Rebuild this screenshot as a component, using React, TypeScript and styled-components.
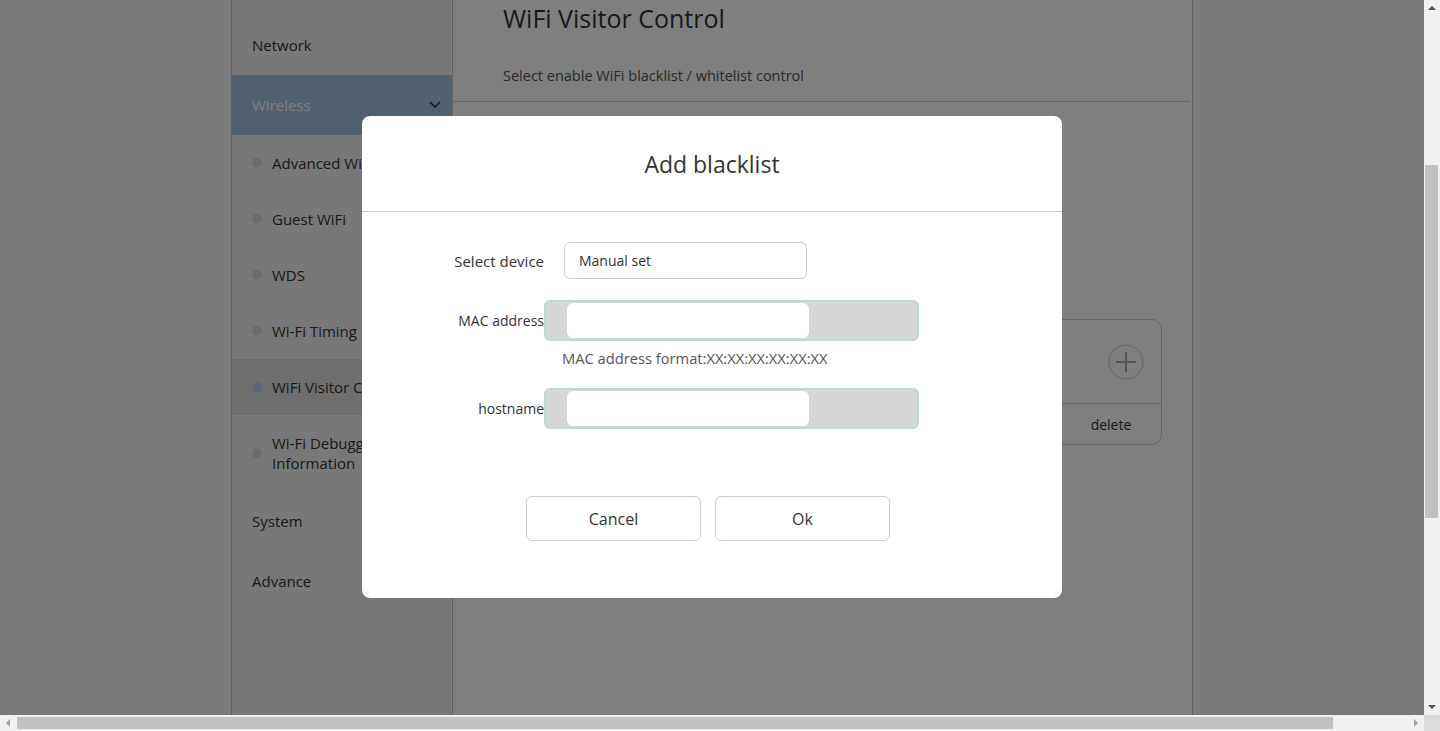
import * as React from 'react';
import styled, { createGlobalStyle } from 'styled-components';

const GlobalStyle = createGlobalStyle`
  html, body {
    margin: 0;
    padding: 0;
    overflow: hidden;
  }
  body {
    font-family: "Open Sans", "Noto Sans", Arial, sans-serif;
    color: #333;
  }
  * {
    box-sizing: border-box;
  }
`;

type SubItem = { label: string; active?: boolean };

const subItems: SubItem[] = [
  { label: 'Advanced WiFi' },
  { label: 'Guest WiFi' },
  { label: 'WDS' },
  { label: 'Wi-Fi Timing' },
  { label: 'WiFi Visitor Control', active: true },
  { label: 'Wi-Fi Debugging Information' },
];

const App: React.FC = () => {
  return (
    <>
      <GlobalStyle />
      <Frame>
        <Viewport>
          <Page>
            <Gutter />
            <Sidebar>
              <MenuItem>Network</MenuItem>
              <MenuItem $open>
                Wireless
                <svg width="12" height="8" viewBox="0 0 12 8">
                  <polyline points="1,1 6,6 11,1" fill="none" stroke="#333" strokeWidth="1.6" />
                </svg>
              </MenuItem>
              {subItems.map((item) => (
                <SubMenuItem key={item.label} $active={item.active}>
                  <Dot $active={item.active} />
                  <span>{item.label}</span>
                </SubMenuItem>
              ))}
              <MenuItem>System</MenuItem>
              <MenuItem>Advance</MenuItem>
            </Sidebar>
            <Content>
              <Header>
                <Title>WiFi Visitor Control</Title>
                <Subtitle>Select enable WiFi blacklist / whitelist control</Subtitle>
              </Header>
              <ModeRow>
                <ModeLabel>Blacklist</ModeLabel>
                <ModeLabel>Whitelist</ModeLabel>
              </ModeRow>
              <ListCard>
                <ListTop>
                  <svg width="36" height="36" viewBox="0 0 36 36">
                    <circle cx="18" cy="18" r="17" fill="none" stroke="#c8c8c8" strokeWidth="1" />
                    <line x1="8" y1="18" x2="28" y2="18" stroke="#aaa" strokeWidth="2" />
                    <line x1="18" y1="8" x2="18" y2="28" stroke="#aaa" strokeWidth="2" />
                  </svg>
                </ListTop>
                <ListRow>
                  <Cell>Device name</Cell>
                  <Cell>MAC address</Cell>
                  <Cell>delete</Cell>
                </ListRow>
              </ListCard>
            </Content>
            <Gutter />
          </Page>
          <Overlay>
            <Modal>
              <ModalHeader>Add blacklist</ModalHeader>
              <ModalBody>
                <FieldRow>
                  <FieldLabel $size={15}>Select device</FieldLabel>
                  <SelectBox>Manual set</SelectBox>
                </FieldRow>
                <FieldRow $gap={21}>
                  <FieldLabel>MAC address</FieldLabel>
                  <FocusWrap>
                    <TextInput />
                  </FocusWrap>
                </FieldRow>
                <Hint>MAC address format:XX:XX:XX:XX:XX:XX</Hint>
                <FieldRow $gap={20}>
                  <FieldLabel>hostname</FieldLabel>
                  <FocusWrap>
                    <TextInput />
                  </FocusWrap>
                </FieldRow>
                <Buttons>
                  <Button>Cancel</Button>
                  <Button>Ok</Button>
                </Buttons>
              </ModalBody>
            </Modal>
          </Overlay>
        </Viewport>
        <VScroll>
          <Arrow $dir="up" />
          <VTrack>
            <VThumb $top={149} $height={353} />
          </VTrack>
          <Arrow $dir="down" />
        </VScroll>
        <HScroll>
          <Arrow $dir="left" />
          <HTrack>
            <HThumb $left={1} $width={1316} />
          </HTrack>
          <Arrow $dir="right" />
        </HScroll>
        <Corner />
      </Frame>
    </>
  );
};

const Frame = styled.div`
  width: 100vw;
  height: 100vh;
  display: grid;
  grid-template-columns: 1fr 16px;
  grid-template-rows: 1fr 16px;
`;

const Viewport = styled.div`
  position: relative;
  overflow: hidden;
`;

const Page = styled.div`
  display: flex;
  height: 100%;
  background: #f4f4f4;
`;

const Gutter = styled.div`
  flex: 0 0 231px;
  &:last-child {
    flex: 1;
  }
`;

const Sidebar = styled.nav`
  flex: 0 0 222px;
  background: #f1f1f1;
  border-left: 1px solid #c4c4c4;
  border-right: 1px solid #c4c4c4;
  padding-top: 15px;
  font-size: 15px;
`;

const MenuItem = styled.div<{ $open?: boolean }>`
  height: 60px;
  display: flex;
  align-items: center;
  justify-content: space-between;
  padding: 0 11px 0 20px;
  background: ${(p) => (p.$open ? '#a6c0e0' : 'transparent')};
  color: ${(p) => (p.$open ? '#fff' : '#333')};
`;

const SubMenuItem = styled.div<{ $active?: boolean }>`
  display: flex;
  align-items: center;
  gap: 10px;
  padding: 18px 20px;
  line-height: 20px;
  background: ${(p) => (p.$active ? '#dcdcdc' : 'transparent')};
  color: #333;
`;

const Dot = styled.i<{ $active?: boolean }>`
  flex: 0 0 10px;
  height: 10px;
  border-radius: 50%;
  background: ${(p) => (p.$active ? '#b6cff0' : '#d6d6d6')};
`;

const Content = styled.main`
  flex: 0 0 740px;
  background: #fff;
  border-right: 1px solid #c4c4c4;
`;

const Header = styled.header`
  padding: 0 0 15px 50px;
  margin-right: 2px;
  border-bottom: 1px solid #ccc;
`;

const Title = styled.h1`
  margin: 0;
  font-size: 25px;
  font-weight: 400;
  line-height: 37px;
  color: #333;
`;

const Subtitle = styled.p`
  margin: 29px 0 0;
  font-size: 14.5px;
  line-height: 20px;
  color: #555;
`;

const ModeRow = styled.div`
  height: 217px;
  display: flex;
  align-items: center;
  gap: 40px;
  padding-left: 50px;
  font-size: 15px;
`;

const ModeLabel = styled.span`
  color: #333;
`;

const ListCard = styled.section`
  margin: 0 30px 0 50px;
  border: 1px solid #ccc;
  border-radius: 10px;
`;

const ListTop = styled.div`
  height: 84px;
  display: flex;
  align-items: center;
  justify-content: flex-end;
  padding-right: 17px;
  padding-top: 1px;
  border-bottom: 1px solid #ccc;
`;

const ListRow = styled.div`
  height: 40px;
  display: grid;
  grid-template-columns: 1fr 1fr 100px;
  align-items: center;
  font-size: 14px;
  color: #333;
`;

const Cell = styled.span`
  text-align: center;
`;

const Overlay = styled.div`
  position: absolute;
  inset: 0;
  padding-bottom: 1px;
  background: rgba(0, 0, 0, 0.5);
  display: flex;
  align-items: center;
  justify-content: center;
`;

const Modal = styled.div`
  width: 700px;
  background: #fff;
  border-radius: 8px;
`;

const ModalHeader = styled.div`
  height: 96px;
  border-bottom: 1px solid #ccc;
  display: flex;
  align-items: center;
  justify-content: center;
  font-size: 23px;
  color: #333;
`;

const ModalBody = styled.div`
  padding: 30px 0 57px;
`;

const FieldRow = styled.div<{ $gap?: number }>`
  display: flex;
  align-items: center;
  margin-top: ${(p) => p.$gap || 0}px;
`;

const FieldLabel = styled.label<{ $size?: number }>`
  flex: 0 0 182px;
  text-align: right;
  font-size: ${(p) => p.$size || 14}px;
  color: #333;
`;

const SelectBox = styled.div`
  margin-left: 20px;
  width: 243px;
  height: 37px;
  border: 1px solid #ccc;
  border-radius: 6px;
  padding-left: 14px;
  display: flex;
  align-items: center;
  font-size: 14px;
  color: #333;
`;

const FocusWrap = styled.div`
  width: 375px;
  height: 41px;
  background: #d6d6d6;
  border: 2px solid #b9dfc6;
  border-radius: 6px;
  padding: 1px 0 0 21px;
`;

const TextInput = styled.input`
  display: block;
  width: 242px;
  height: 35px;
  border: none;
  border-radius: 6px;
  background: #fff;
  &:focus {
    outline: none;
  }
`;

const Hint = styled.div`
  margin: 7px 0 0 200px;
  line-height: 20px;
  font-size: 14.7px;
  color: #555;
`;

const Buttons = styled.div`
  display: flex;
  gap: 14px;
  margin-top: 67px;
  padding-left: 164px;
`;

const Button = styled.button`
  width: 175px;
  height: 45px;
  background: #fff;
  border: 1px solid #ccc;
  border-radius: 6px;
  font-family: inherit;
  font-size: 16px;
  color: #333;
`;

const VScroll = styled.div`
  background: #f1f1f1;
  display: flex;
  flex-direction: column;
`;

const HScroll = styled.div`
  background: #f1f1f1;
  display: flex;
`;

const Corner = styled.div`
  background: #dcdcdc;
`;

const Arrow = styled.div<{ $dir: 'up' | 'down' | 'left' | 'right' }>`
  flex: 0 0 16px;
  width: 16px;
  height: 16px;
  display: flex;
  align-items: center;
  justify-content: center;
  &::before {
    content: '';
    width: 0;
    height: 0;
    border-style: solid;
    border-color: transparent;
    ${(p) =>
      p.$dir === 'up'
        ? 'border-width: 0 4px 4px 4px; border-bottom-color: #505050;'
        : p.$dir === 'down'
        ? 'border-width: 4px 4px 0 4px; border-top-color: #505050;'
        : p.$dir === 'left'
        ? 'border-width: 4px 4px 4px 0; border-right-color: #a3a3a3;'
        : 'border-width: 4px 0 4px 4px; border-left-color: #a3a3a3;'}
  }
`;

const VTrack = styled.div`
  flex: 1;
  padding: 0 2px 0 1px;
`;

const VThumb = styled.div<{ $top: number; $height: number }>`
  margin-top: ${(p) => p.$top}px;
  height: ${(p) => p.$height}px;
  background: #c1c1c1;
`;

const HTrack = styled.div`
  flex: 1;
  padding-top: 2px;
`;

const HThumb = styled.div<{ $left: number; $width: number }>`
  margin-left: ${(p) => p.$left}px;
  width: ${(p) => p.$width}px;
  height: 12px;
  background: #c1c1c1;
`;

export default App;
